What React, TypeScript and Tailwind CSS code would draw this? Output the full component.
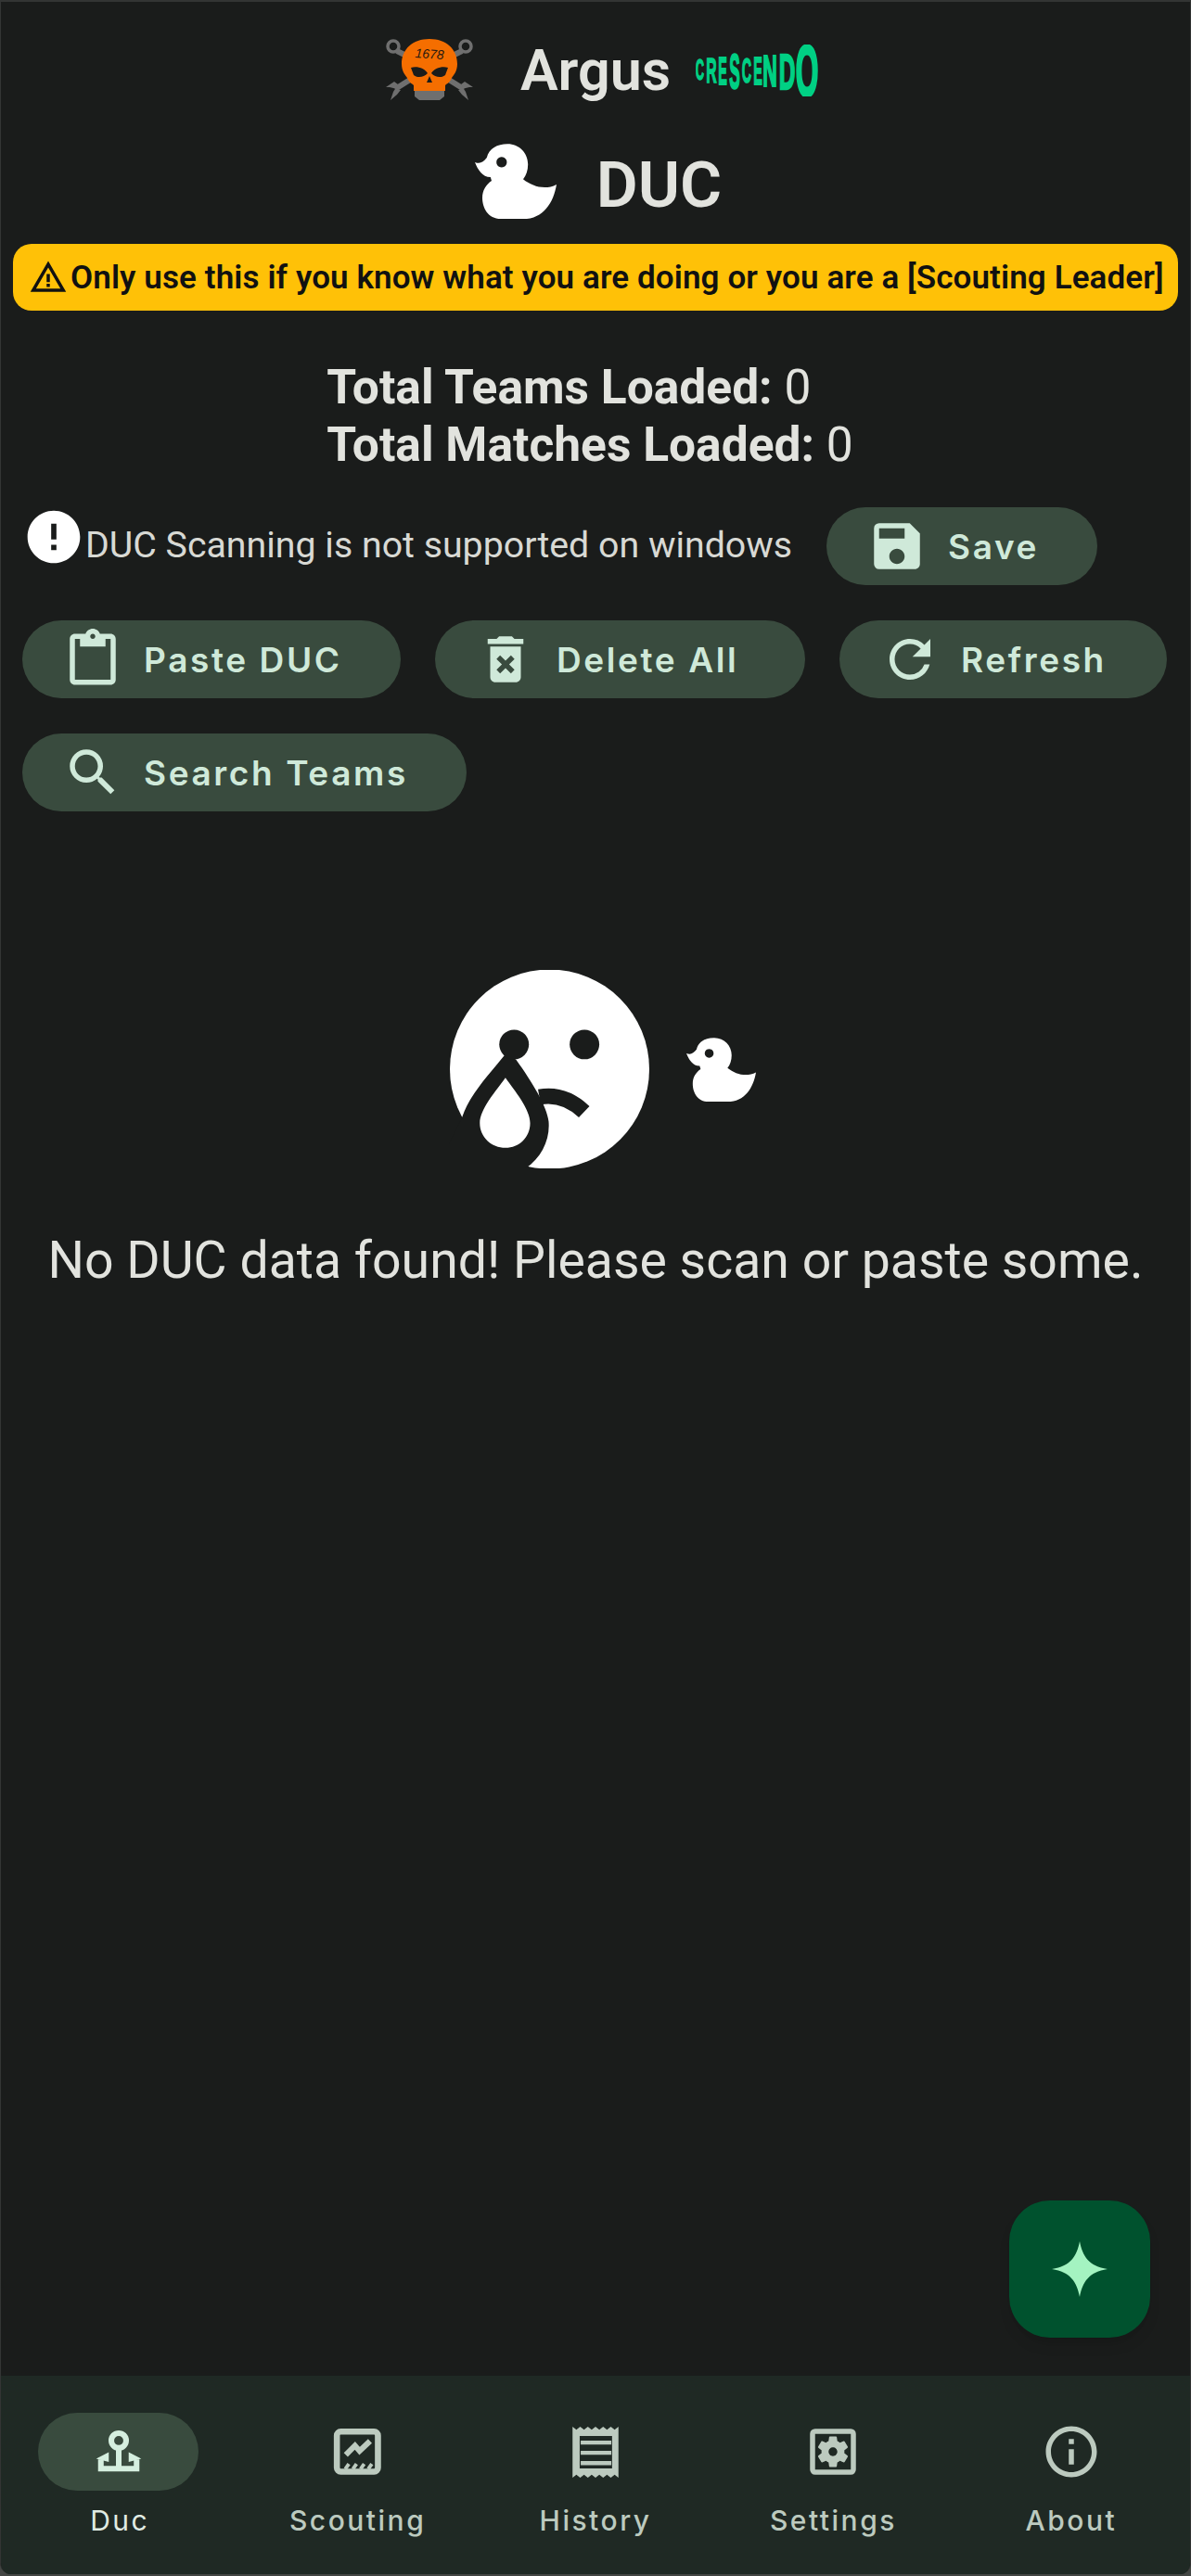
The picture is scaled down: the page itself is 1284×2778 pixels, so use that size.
import {
  MdContentPaste,
  MdDeleteForever,
  MdError,
  MdInfoOutline,
  MdOutlineSettingsApplications,
  MdRefresh,
  MdSave,
  MdSearch,
  MdWarningAmber,
} from 'react-icons/md';
import type { ReactNode } from 'react';

const plex = 'font-["Roboto",sans-serif]';
const label = 'font-["Inter",sans-serif]';

const DUCK =
  'M0 52C14 58 22 52 32 40C38 15 60 3 88 3C120 3 143 28 143 58C143 75 138 88 130 98C155 118 190 128 220 112C212 160 185 205 130 205L70 205C35 205 20 175 20 148C20 128 30 112 45 102L42 92C20 92 8 72 0 52ZM72 38a14 14 0 1 0 0.01 0Z';

function Duck({ className }: { className?: string }) {
  return (
    <svg viewBox="0 0 220 207" className={className} fill="#fff">
      <path d={DUCK} fillRule="evenodd" />
    </svg>
  );
}

function Skull() {
  return (
    <svg viewBox="0 0 94 68" className="h-[68px] w-[94px]">
      <g fill="none" stroke="#6f6f6f" strokeWidth="3.5">
        <circle cx="8" cy="8" r="6" />
        <circle cx="86" cy="8" r="6" />
      </g>
      <g stroke="#6f6f6f" strokeWidth="6">
        <path d="M12 13L22 18M82 13L72 18M26 44L10 54M68 44L84 54" />
      </g>
      <path
        d="M0 52L9 46L13 49L8 57L5 66L12 60L16 55L4 52M94 52L85 46L81 49L86 57L89 66L82 60L78 55L90 52"
        fill="#6f6f6f"
      />
      <path d="M31 53H63V62L58 66H36L31 62Z" fill="#6f6f6f" />
      <path
        d="M47 0C65 0 77 11 77 27C77 35 73 39 71 42C69 47 66 48 64 50V56H30V50C28 48 25 47 23 42C21 39 17 35 17 27C17 11 29 0 47 0Z"
        fill="#f56e00"
      />
      <path
        d="M27 31C34 29 42 32 45 37C41 42 33 42 30 39ZM67 31C60 29 52 32 49 37C53 42 61 42 64 39ZM47 40L50 47H44Z"
        fill="#1a1c1b"
      />
      <text
        x="47"
        y="21"
        fontSize="14"
        fontStyle="italic"
        textAnchor="middle"
        fill="#2a1a10"
        fontFamily="Liberation Sans, sans-serif"
        transform="rotate(4 47 18)"
      >
        1678
      </text>
    </svg>
  );
}

// letter, centre x, width, top, height
const crescendoLetters = [
  ['C', 4.5, 9, 15, 23],
  ['R', 17, 11, 14, 27],
  ['E', 29, 10, 12, 31],
  ['S', 42, 12, 10, 37],
  ['C', 55, 10, 14, 27],
  ['E', 67, 10, 12, 31],
  ['N', 80, 15, 10, 35],
  ['D', 98.5, 17, 9, 39],
  ['O', 120, 22, 0, 55],
] as const;

function Crescendo() {
  return (
    <svg viewBox="0 0 137 56" className="ml-[2px] h-[56px] w-[137px]">
      {crescendoLetters.map(([letter, x, w, top, h], i) => (
        <text
          key={i}
          transform={`translate(${x} ${top + h}) scale(${w / 23} ${h / 23.6})`}
          fontSize="33"
          fontWeight="700"
          textAnchor="middle"
          fill="#00d084"
          stroke="#00d084"
          strokeWidth="1.5"
          fontFamily="Liberation Sans, sans-serif"
        >
          {letter}
        </text>
      ))}
    </svg>
  );
}

function SadFace() {
  return (
    <svg viewBox="132 80 652 640" className="h-[214px] w-[217px]">
      <circle cx="458" cy="400" r="323" fill="#fff" />
      <path
        d="M320 345C260 420 200 480 175 555L90 730L375 725C430 690 460 630 455 570C450 520 400 440 350 370Z"
        fill="#1a1c1b"
      />
      <path
        d="M315 428C285 470 232 530 232 575C232 620 270 655 315 655C360 655 395 620 395 575C395 530 345 470 315 428Z"
        fill="#fff"
      />
      <path d="M425 490C480 480 530 500 570 538" fill="none" stroke="#1a1c1b" strokeWidth="50" />
      <circle cx="343" cy="320" r="48" fill="#1a1c1b" />
      <circle cx="571" cy="320" r="48" fill="#1a1c1b" />
    </svg>
  );
}

const pillIcon = 'h-[66px] w-[66px] shrink-0';

function Pill({ icon, text, width }: { icon: ReactNode; text: string; width: string }) {
  return (
    <button
      className={`flex h-[84px] items-center gap-[22px] rounded-full bg-[#394b3e] pl-[43px] text-[#cfe9d9] ${width}`}
    >
      {icon}
      <span className={`${label} text-[37px] leading-none font-semibold tracking-[2.6px] whitespace-nowrap`}>
        {text}
      </span>
    </button>
  );
}

const navIcon = 'h-[66px] w-[66px]';

function NavItem({ icon, text, active }: { icon: ReactNode; text: string; active?: boolean }) {
  return (
    <div className="flex flex-1 flex-col items-center">
      <div
        className={`flex h-[84px] w-[173px] items-center justify-center rounded-full ${
          active ? 'mr-[3px] bg-[#394b3e] text-[#d5efdf]' : 'text-[#bccabf]'
        }`}
      >
        {icon}
      </div>
      <span
        className={`${label} mt-[12px] text-[30px] leading-[40px] tracking-[2.5px] ${
          active ? 'font-normal text-[#e0ebe3]' : 'font-medium text-[#bccabf]'
        }`}
      >
        {text}
      </span>
    </div>
  );
}

export default function App() {
  return (
    <div className="flex h-[2778px] w-[1284px] flex-col bg-[#444644] pb-[2px]">
      <div className="relative flex min-h-0 flex-1 flex-col overflow-hidden rounded-b-[12px] border-t-2 border-r border-l border-[#333534] bg-[#1a1c1b] text-[#e2e3de]">
        <header className="flex h-[148px] items-center justify-center pl-[19px]">
          <Skull />
          <span className={`${plex} mr-[25px] ml-[51px] text-[61px] leading-none font-semibold`}>Argus</span>
          <Crescendo />
        </header>

        <div className="flex h-[90px] items-center justify-center gap-[43px] pl-[6px]">
          <Duck className="h-[83px] w-[88px]" />
          <h1 className={`${plex} mt-[8px] text-[69px] leading-none font-semibold`}>DUC</h1>
        </div>

        <div className="mx-[13px] mt-[23px] flex h-[72px] items-center gap-[3px] rounded-[20px] bg-[#ffc107] pl-[17px] text-[#111]">
          <MdWarningAmber className="h-[42px] w-[42px] shrink-0" />
          <span className={`${plex} text-[35px] leading-none font-semibold tracking-[0.1px] whitespace-nowrap`}>
            Only use this if you know what you are doing or you are a [Scouting Leader]
          </span>
        </div>

        <div className="mt-[52px] flex justify-center pr-[12px]">
          <div className={`${plex} flex flex-col text-[51.5px] leading-[62px]`}>
            <div>
              <span className="font-bold">Total Teams Loaded:</span> 0
            </div>
            <div>
              <span className="font-bold">Total Matches Loaded:</span> 0
            </div>
          </div>
        </div>

        <div className="mt-[36px] flex flex-wrap gap-x-[37px] gap-y-[38px] px-[23px]">
          <div className="flex h-[84px] w-[830px] items-start">
            <MdError className="mt-[-2px] h-[68px] w-[68px] shrink-0 text-white" />
            <span className={`${plex} mt-[16px] text-[39.3px] leading-[50px] whitespace-nowrap text-[#d8d9d4]`}>
              DUC Scanning is not supported on windows
            </span>
          </div>
          <Pill icon={<MdSave className={pillIcon} />} text="Save" width="w-[292px]" />
          <Pill icon={<MdContentPaste className={pillIcon} />} text="Paste DUC" width="w-[408px]" />
          <Pill icon={<MdDeleteForever className={pillIcon} />} text="Delete All" width="w-[399px]" />
          <Pill icon={<MdRefresh className={pillIcon} />} text="Refresh" width="w-[353px]" />
          <Pill icon={<MdSearch className={pillIcon} />} text="Search Teams" width="w-[479px]" />
        </div>

        <div className="mt-[171px] flex items-center justify-center gap-[39px] pl-[15px]">
          <SadFace />
          <Duck className="h-[71px] w-[75px]" />
        </div>
        <p className={`${plex} mt-[65px] text-center text-[55.4px] leading-[70px] text-[#e2e3de]`}>
          No DUC data found! Please scan or paste some.
        </p>

        <button className="absolute right-[43px] bottom-[255px] flex h-[148px] w-[152px] items-center justify-center rounded-[44px] bg-[#00522e] shadow-lg">
          <svg viewBox="0 0 60 60" className="h-[60px] w-[60px]" fill="#a4f3c1">
            <path d="M30 0C33 16 40 27 60 30C40 33 33 44 30 60C27 44 20 33 0 30C20 27 27 16 30 0Z" />
          </svg>
        </button>

        <nav className="mt-auto flex h-[214px] bg-[#1f2924] pt-[40px]">
          <NavItem
            active
            text="Duc"
            icon={
              <svg viewBox="0 0 24 24" className={navIcon} fill="none" stroke="currentColor" strokeWidth="2.2">
                <circle cx="12" cy="7.6" r="2.9" />
                <path d="M12 10.5V18M5 15V18.6H19V15" />
                <path d="M4 14.6L7.8 12.7V15.6L4 14.6ZM20 14.6L16.2 12.7V15.6L20 14.6Z" fill="currentColor" strokeWidth="0.6" />
              </svg>
            }
          />
          <NavItem
            text="Scouting"
            icon={
              <svg viewBox="0 0 24 24" className={navIcon} fill="none" stroke="currentColor" strokeWidth="2.4">
                <rect x="3.7" y="4.1" width="16.1" height="15.7" rx="1.5" />
                <path d="M7.2 13.2L10.8 9.6L12.6 11.7L16.7 7.8" strokeWidth="2.2" />
                <path d="M7 18.8L8.4 16.8M10 18.8L11.4 16.8M13 18.8L14.4 16.8M16 18.8L17.4 16.8" strokeWidth="1.4" />
              </svg>
            }
          />
          <NavItem
            text="History"
            icon={
              <svg viewBox="0 0 24 24" className={navIcon} fill="currentColor">
                <path
                  fillRule="evenodd"
                  d="M3 2.2L4.5 3.4L6 2.2L7.5 3.4L9 2.2L10.5 3.4L12 2.2L13.5 3.4L15 2.2L16.5 3.4L18 2.2L19.5 3.4L21 2.2V22.2L19.5 21L18 22.2L16.5 21L15 22.2L13.5 21L12 22.2L10.5 21L9 22.2L7.5 21L6 22.2L4.5 21L3 22.2ZM5.8 5.8V18.5H18.5V5.8Z"
                />
                <path d="M6.2 7.6H18.2V9.2H6.2ZM6.2 11.6H18.2V13.2H6.2ZM6.2 15.6H18.2V17.3H6.2Z" />
              </svg>
            }
          />
          <NavItem text="Settings" icon={<MdOutlineSettingsApplications className={navIcon} />} />
          <NavItem text="About" icon={<MdInfoOutline className={navIcon} />} />
        </nav>
      </div>
    </div>
  );
}
